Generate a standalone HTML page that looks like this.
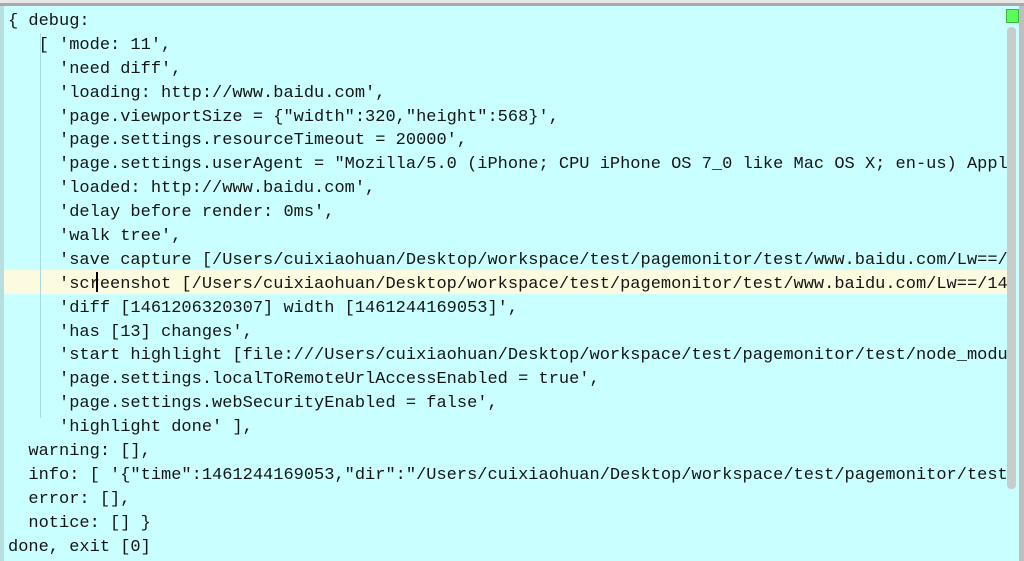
<!DOCTYPE html>
<html><head><meta charset="utf-8"><style>
html,body{margin:0;padding:0;width:1024px;height:561px;overflow:hidden;background:#c9ffff;position:relative;}
.top{position:absolute;left:0;top:0;width:1024px;height:3px;background:#e8e8e8;}
.top2{position:absolute;left:0;top:3px;width:1024px;height:3px;background:#a9a9a9;}
.gut{position:absolute;left:0;top:6px;width:4px;height:555px;background:#b8dede;}
.guide{position:absolute;left:40px;top:33px;width:1px;height:385px;background:#a8dcdc;}
.rb{position:absolute;left:1019px;top:6px;width:5px;height:555px;background:#bfbfbf;}
.green{position:absolute;left:1006px;top:9px;width:11px;height:12px;background:#5cfc5c;border:1px solid #3cb83c;}
.sb{position:absolute;left:1007px;top:27px;width:9px;height:462px;background:#c8cccc;border-radius:4px;}
.hl{position:absolute;left:4px;top:270px;width:1003px;height:24px;background:#fdfbdf;}
.t{position:absolute;left:8px;top:10px;margin:0;font-family:"Liberation Mono",monospace;font-size:17px;color:#151515;}
.t div{height:23.9px;line-height:24px;white-space:pre;overflow:visible;}
.cur{position:absolute;left:96px;top:272px;width:2px;height:20px;background:#000;}
</style></head><body>
<div class="top"></div><div class="top2"></div><div class="gut"></div>
<div class="hl"></div><div class="guide"></div>
<div class="t">
<div>{ debug:</div>
<div>   [ 'mode: 11',</div>
<div>     'need diff',</div>
<div>     'loading: http://www.baidu.com',</div>
<div>     'page.viewportSize = {"width":320,"height":568}',</div>
<div>     'page.settings.resourceTimeout = 20000',</div>
<div>     'page.settings.userAgent = "Mozilla/5.0 (iPhone; CPU iPhone OS 7_0 like Mac OS X; en-us) Appl</div>
<div>     'loaded: http://www.baidu.com',</div>
<div>     'delay before render: 0ms',</div>
<div>     'walk tree',</div>
<div>     'save capture [/Users/cuixiaohuan/Desktop/workspace/test/pagemonitor/test/www.baidu.com/Lw==/</div>
<div>     'screenshot [/Users/cuixiaohuan/Desktop/workspace/test/pagemonitor/test/www.baidu.com/Lw==/14</div>
<div>     'diff [1461206320307] width [1461244169053]',</div>
<div>     'has [13] changes',</div>
<div>     'start highlight [file:///Users/cuixiaohuan/Desktop/workspace/test/pagemonitor/test/node_modu</div>
<div>     'page.settings.localToRemoteUrlAccessEnabled = true',</div>
<div>     'page.settings.webSecurityEnabled = false',</div>
<div>     'highlight done' ],</div>
<div>  warning: [],</div>
<div>  info: [ '{"time":1461244169053,"dir":"/Users/cuixiaohuan/Desktop/workspace/test/pagemonitor/test</div>
<div>  error: [],</div>
<div>  notice: [] }</div>
<div>done, exit [0]</div>
</div>
<div class="cur"></div>
<div class="rb"></div><div class="sb"></div><div class="green"></div>
</body></html>
